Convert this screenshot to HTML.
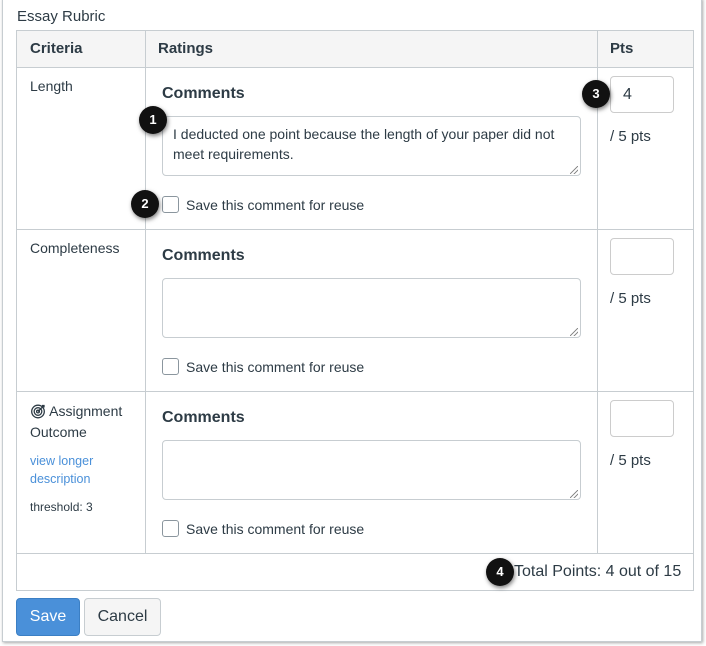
<!DOCTYPE html>
<html><head><style>
*{box-sizing:border-box;margin:0;padding:0}
body{width:706px;height:646px;background:#fff;font-family:"Liberation Sans",sans-serif;color:#2d3b45;position:relative;overflow:hidden}
.frame{position:absolute;left:2px;top:-2px;width:700px;height:644px;border:1px solid #c7cdd1;box-shadow:1px 1px 3px rgba(0,0,0,.35)}
.a{position:absolute}
.hl{position:absolute;height:1px;background:#c7cdd1}
.vl{position:absolute;width:1px;background:#c7cdd1}
.ta{position:absolute;border:1px solid #c7cdd1;border-radius:4px;background:#fff;font-size:14px;line-height:20px;padding:7px 10px;color:#2d3b45}
.cb{position:absolute;width:17px;height:17px;border:1px solid #8b969e;border-radius:3px;background:#fff}
.lbl{position:absolute;font-size:14px}
.h{position:absolute;font-size:16px;font-weight:bold}
.pin{position:absolute;width:24px;height:24px;border:1px solid #ccc;border-radius:4px;font-size:16px;padding:8px 12px}
.num{position:absolute;width:28px;height:28px;border-radius:50%;background:#111;color:#fff;font-weight:bold;font-size:13px;text-align:center;line-height:28px;box-shadow:1px 2px 4px rgba(0,0,0,.5)}
.grip{position:absolute;width:8px;height:8px;background:linear-gradient(135deg,transparent 45%,#888 47%,#888 53%,transparent 55%,transparent 70%,#888 72%,#888 78%,transparent 80%)}
</style></head><body>
<div class="frame"></div>
<div class="a" style="left:17px;top:8px;font-size:15px">Essay Rubric</div>
<div class="a" style="left:16px;top:30px;width:678px;height:37px;background:#f5f5f5"></div>
<div class="hl" style="left:16px;top:30px;width:678px"></div>
<div class="hl" style="left:16px;top:67px;width:678px"></div>
<div class="hl" style="left:16px;top:229px;width:678px"></div>
<div class="hl" style="left:16px;top:391px;width:678px"></div>
<div class="hl" style="left:16px;top:553px;width:678px"></div>
<div class="hl" style="left:16px;top:590px;width:678px"></div>
<div class="vl" style="left:16px;top:30px;height:561px"></div>
<div class="vl" style="left:693px;top:30px;height:561px"></div>
<div class="vl" style="left:145px;top:30px;height:523px"></div>
<div class="vl" style="left:597px;top:30px;height:523px"></div>
<div class="h" style="left:30px;top:40px;font-size:15px">Criteria</div>
<div class="h" style="left:158px;top:40px;font-size:15px">Ratings</div>
<div class="h" style="left:610px;top:40px;font-size:15px">Pts</div>

<div class="a" style="left:30px;top:78px;font-size:14px">Length</div>
<div class="a" style="left:30px;top:240px;font-size:14px">Completeness</div>
<div class="a" style="left:30px;top:401px;font-size:14px;line-height:21px;width:112px">
<svg width="16" height="16" viewBox="0 0 16 16" style="vertical-align:-3px"><g fill="none" stroke="#2d3b45" stroke-width="1.3"><circle cx="8" cy="8.5" r="6.3"/><circle cx="8" cy="8.5" r="3.8"/><circle cx="8" cy="8.5" r="1.4"/><path d="M8 8.5L14 2.5M12 2.5h2v2"/></g></svg> Assignment Outcome</div>
<div class="a" style="left:30px;top:452px;font-size:12.5px;line-height:18px;color:#4a90d9">view longer<br>description</div>
<div class="a" style="left:30px;top:500px;font-size:12px">threshold: 3</div>

<div class="h" style="left:162px;top:85px">Comments</div>
<div class="ta" style="left:162px;top:116px;width:419px;height:60px">I deducted one point because the length of your paper did not meet requirements.</div>
<div class="grip" style="left:570px;top:166px"></div>
<div class="cb" style="left:162px;top:196px"></div>
<div class="lbl" style="left:186px;top:197px">Save this comment for reuse</div>

<div class="h" style="left:162px;top:247px">Comments</div>
<div class="ta" style="left:162px;top:278px;width:419px;height:60px"></div>
<div class="grip" style="left:570px;top:328px"></div>
<div class="cb" style="left:162px;top:358px"></div>
<div class="lbl" style="left:186px;top:359px">Save this comment for reuse</div>

<div class="h" style="left:162px;top:409px">Comments</div>
<div class="ta" style="left:162px;top:440px;width:419px;height:60px"></div>
<div class="grip" style="left:570px;top:490px"></div>
<div class="cb" style="left:162px;top:520px"></div>
<div class="lbl" style="left:186px;top:521px">Save this comment for reuse</div>

<div class="pin" style="left:610px;top:76px;width:64px;height:37px;padding:9px 12px">4</div>
<div class="a" style="left:610px;top:128px;font-size:15px">/ 5 pts</div>
<div class="pin" style="left:610px;top:238px;width:64px;height:37px"></div>
<div class="a" style="left:610px;top:290px;font-size:15px">/ 5 pts</div>
<div class="pin" style="left:610px;top:400px;width:64px;height:37px"></div>
<div class="a" style="left:610px;top:452px;font-size:15px">/ 5 pts</div>

<div class="a" style="left:514px;top:563px;font-size:16px">Total Points: 4 out of 15</div>

<div class="num" style="left:139px;top:106px">1</div>
<div class="num" style="left:131px;top:190px">2</div>
<div class="num" style="left:582px;top:80px">3</div>
<div class="num" style="left:486px;top:558px">4</div>

<div class="a" style="left:16px;top:598px;width:64px;height:38px;background:#4a90d9;border:1px solid #3b7fc4;border-radius:4px;color:#fff;font-size:16px;text-align:center;line-height:36px">Save</div>
<div class="a" style="left:84px;top:598px;width:77px;height:38px;background:#f5f5f5;border:1px solid #c7cdd1;border-radius:4px;color:#2d3b45;font-size:16px;text-align:center;line-height:36px">Cancel</div>
</body></html>
